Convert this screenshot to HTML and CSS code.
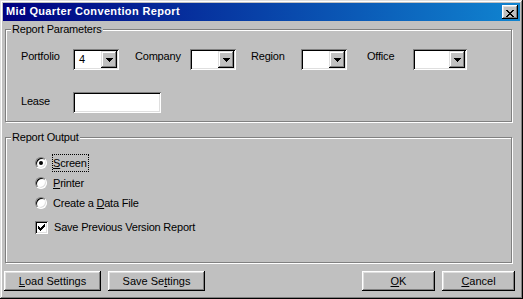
FILE: index.html
```html
<!DOCTYPE html>
<html lang="en">
<head>
    <meta charset="UTF-8">
    <meta name="viewport" content="width=device-width, initial-scale=1.0">
    <title>Mid Quarter Convention Report</title>
    <link rel="stylesheet" href="styles.css">
</head>
<body>
    <div class="window">
        <div class="titlebar">
            <span class="title">Mid Quarter Convention Report</span>
            <button class="close-btn" aria-label="Close">
                <svg width="8" height="7" viewBox="0 0 8 7"><path d="M0 0h2v1H0zM6 0h2v1H6zM1 1h2v1H1zM5 1h2v1H5zM2 2h4v1H2zM3 3h2v1H3zM2 4h4v1H2zM1 5h2v1H1zM5 5h2v1H5zM0 6h2v1H0zM6 6h2v1H6z" fill="#000"/></svg>
            </button>
        </div>

        <div class="client">
            <div class="group group-params">
                <span class="group-title">Report Parameters</span>

                <div class="param-row">
                    <div class="field field-portfolio">
                        <label>Portfolio</label>
                        <div class="combo">
                            <span class="combo-value">4</span>
                            <span class="combo-btn"><svg width="7" height="4" viewBox="0 0 7 4"><path d="M0 0h7v1H0zM1 1h5v1H1zM2 2h3v1H2zM3 3h1v1H3z" fill="#000"/></svg></span>
                        </div>
                    </div>
                    <div class="field field-company">
                        <label>Company</label>
                        <div class="combo">
                            <span class="combo-value"></span>
                            <span class="combo-btn"><svg width="7" height="4" viewBox="0 0 7 4"><path d="M0 0h7v1H0zM1 1h5v1H1zM2 2h3v1H2zM3 3h1v1H3z" fill="#000"/></svg></span>
                        </div>
                    </div>
                    <div class="field field-region">
                        <label>Region</label>
                        <div class="combo">
                            <span class="combo-value"></span>
                            <span class="combo-btn"><svg width="7" height="4" viewBox="0 0 7 4"><path d="M0 0h7v1H0zM1 1h5v1H1zM2 2h3v1H2zM3 3h1v1H3z" fill="#000"/></svg></span>
                        </div>
                    </div>
                    <div class="field field-office">
                        <label>Office</label>
                        <div class="combo combo-wide">
                            <span class="combo-value"></span>
                            <span class="combo-btn"><svg width="7" height="4" viewBox="0 0 7 4"><path d="M0 0h7v1H0zM1 1h5v1H1zM2 2h3v1H2zM3 3h1v1H3z" fill="#000"/></svg></span>
                        </div>
                    </div>
                </div>

                <div class="lease-row">
                    <label>Lease</label>
                    <div class="textbox"></div>
                </div>
            </div>

            <div class="group group-output">
                <span class="group-title">Report Output</span>

                <div class="option option-first">
                    <span class="radio checked"></span>
                    <span class="option-label focused"><u>S</u>creen</span>
                </div>
                <div class="option">
                    <span class="radio"></span>
                    <span class="option-label"><u>P</u>rinter</span>
                </div>
                <div class="option">
                    <span class="radio"></span>
                    <span class="option-label">Create a <u>D</u>ata File</span>
                </div>
                <div class="option option-check">
                    <span class="checkbox"><svg width="7" height="7" viewBox="0 0 7 7"><path d="M6 0h1v1H6zM5 1h2v1H5zM0 2h1v1H0zM4 2h3v1H4zM0 3h2v1H0zM3 3h3v1H3zM0 4h5v1H0zM1 5h3v1H1zM2 6h1v1H2z" fill="#000"/></svg></span>
                    <span class="check-label">Save Previous Version Report</span>
                </div>
            </div>

            <div class="button-bar">
                <div class="button-group">
                    <button class="btn btn-wide"><u>L</u>oad Settings</button>
                    <button class="btn btn-wide">Save Se<u>t</u>tings</button>
                </div>
                <div class="button-group">
                    <button class="btn"><u>O</u>K</button>
                    <button class="btn"><u>C</u>ancel</button>
                </div>
            </div>
        </div>
    </div>
</body>
</html>
```

FILE: styles.css
```css
* {
    box-sizing: border-box;
}

html, body {
    margin: 0;
    padding: 0;
    background-color: #c0c0c0;
}

body {
    font-family: "Liberation Sans", Arial, sans-serif;
    font-size: 11px;
    line-height: 13px;
    letter-spacing: -0.2px;
    color: #000;
}

u {
    text-decoration: underline;
    text-underline-offset: 1px;
}

/* window frame */
.window {
    width: 523px;
    height: 299px;
    padding: 3px;
    background-color: #c0c0c0;
    box-shadow: inset -1px -1px #000, inset 1px 1px #dfdfdf,
                inset -2px -2px #808080, inset 2px 2px #fff;
}

.titlebar {
    height: 18px;
    display: flex;
    align-items: center;
    justify-content: space-between;
    padding: 0 2px 0 3px;
    background: linear-gradient(90deg, #000080, #1084d0);
}

.title {
    color: #fff;
    font-weight: bold;
    letter-spacing: 0.35px;
    margin-top: -1px;
}

.close-btn {
    width: 16px;
    height: 14px;
    padding: 3px 0 0 4px;
    border: none;
    background-color: #c0c0c0;
    box-shadow: inset -1px -1px #000, inset 1px 1px #fff,
                inset -2px -2px #808080, inset 2px 2px #dfdfdf;
    text-align: left;
}

.close-btn svg {
    display: block;
}

.client {
    padding-top: 8px;
}

/* group boxes */
.group {
    position: relative;
    width: 507px;
    margin-left: 2px;
    border: 1px solid #808080;
    box-shadow: inset 1px 1px #fff, 1px 1px #fff;
}

.group-title {
    position: absolute;
    top: -7px;
    left: 5px;
    padding: 0 1px;
    background-color: #c0c0c0;
}

.group-params {
    height: 93px;
    padding: 19px 0 0 15px;
}

.group-output {
    height: 126px;
    margin-top: 15px;
    padding: 14px 0 0 29px;
}

/* report parameters */
.param-row {
    display: flex;
    align-items: flex-start;
}

.field {
    display: flex;
    align-items: flex-start;
}

.field label {
    margin-top: 1px;
}

.field-portfolio label { width: 52px; }
.field-portfolio { margin-right: 16px; }
.field-company label { width: 55px; }
.field-company { margin-right: 15px; }
.field-region label { width: 50px; }
.field-region { margin-right: 20px; }
.field-office label { width: 46px; }

.combo {
    display: flex;
    width: 46px;
    height: 21px;
    padding: 2px;
    background-color: #fff;
    box-shadow: inset 1px 1px #808080, inset -1px -1px #fff,
                inset 2px 2px #000, inset -2px -2px #dfdfdf;
}

.combo-wide {
    width: 54px;
}

.combo-value {
    flex: 1;
    padding-left: 4px;
    line-height: 17px;
}

.combo-btn {
    width: 16px;
    height: 17px;
    display: flex;
    align-items: center;
    justify-content: center;
    background-color: #c0c0c0;
    box-shadow: inset -1px -1px #000, inset 1px 1px #dfdfdf,
                inset -2px -2px #808080, inset 2px 2px #fff;
}

.combo-btn svg {
    display: block;
    margin-left: 1px;
}

.lease-row {
    display: flex;
    align-items: flex-start;
    margin-top: 22px;
}

.lease-row label {
    width: 52px;
    margin-top: 3px;
}

.textbox {
    width: 88px;
    height: 21px;
    background-color: #fff;
    box-shadow: inset 1px 1px #808080, inset -1px -1px #fff,
                inset 2px 2px #000, inset -2px -2px #dfdfdf;
}

/* report output */
.option {
    display: flex;
    align-items: center;
    height: 20px;
}

.option-first {
    height: 21px;
}

.option-check {
    margin-top: 4px;
}

.radio {
    position: relative;
    width: 12px;
    height: 12px;
    margin-right: 5px;
    border-radius: 50%;
    background-color: #fff;
    border: 1px solid;
    border-color: #808080 #fff #fff #808080;
    box-shadow: inset 1px 1px #000, inset -1px -1px #dfdfdf;
}

.radio.checked::after {
    content: "";
    position: absolute;
    left: 3px;
    top: 3px;
    width: 4px;
    height: 4px;
    border-radius: 50%;
    background-color: #000;
}

.option-label {
    padding: 1px 0 1px 1px;
    border: 1px solid transparent;
    border-left: none;
    line-height: 14px;
}

.option-label.focused {
    padding: 1px 1px 1px 0;
    border: 1px dotted #000;
}

.checkbox {
    width: 13px;
    height: 13px;
    margin-right: 6px;
    padding: 3px;
    background-color: #fff;
    box-shadow: inset 1px 1px #808080, inset -1px -1px #fff,
                inset 2px 2px #000, inset -2px -2px #dfdfdf;
}

.checkbox svg {
    display: block;
}

/* bottom buttons */
.button-bar {
    display: flex;
    justify-content: space-between;
    margin-top: 8px;
    padding: 0 5px 0 1px;
}

.button-group {
    display: flex;
    gap: 7px;
}

.btn {
    width: 73px;
    height: 20px;
    padding: 0;
    border: none;
    font: inherit;
    color: #000;
    background-color: #c0c0c0;
    box-shadow: inset -1px -1px #000, inset 1px 1px #fff,
                inset -2px -2px #808080, inset 2px 2px #dfdfdf;
}

.btn-wide {
    width: 97px;
}
```
